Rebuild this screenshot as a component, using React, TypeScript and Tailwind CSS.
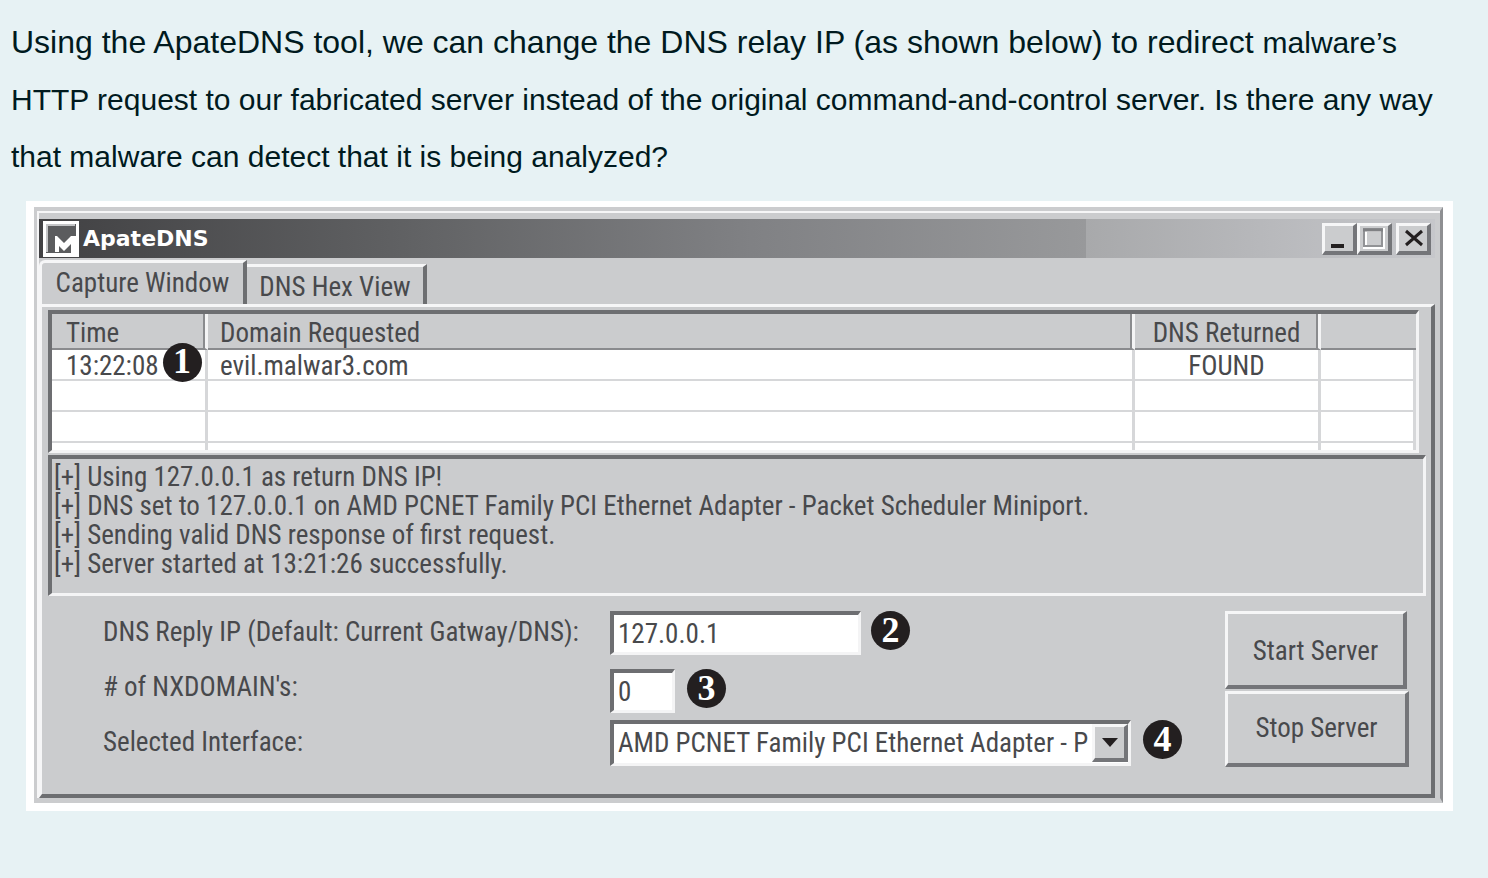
import type { ReactNode } from "react";

const logLines = [
  "[+] Using 127.0.0.1 as return DNS IP!",
  "[+] DNS set to 127.0.0.1 on AMD PCNET Family PCI Ethernet Adapter - Packet Scheduler Miniport.",
  "[+] Sending valid DNS response of first request.",
  "[+] Server started at 13:21:26 successfully.",
];

const raised =
  "border-t-3 border-l-3 border-r-4 border-b-4 border-t-[#f6f6f7] border-l-[#f6f6f7] border-r-[#747579] border-b-[#747579] bg-[#cbccce]";
const sunken =
  "border-t-4 border-l-4 border-r-3 border-b-3 border-t-[#6d6e71] border-l-[#6d6e71] border-r-[#f4f4f5] border-b-[#f4f4f5]";

function Badge({ children }: { children: ReactNode }) {
  return (
    <span className="flex size-[39px] shrink-0 items-center justify-center rounded-full bg-[#231f20] pb-[2px] font-['Liberation_Serif',serif] text-[36px] leading-none font-bold text-white">
      {children}
    </span>
  );
}

function CaptionButton({ label, children }: { label: string; children: ReactNode }) {
  return (
    <button type="button" aria-label={label} className={`h-8 w-[35px] ${raised}`}>
      <svg viewBox="0 0 28 25" className="h-[25px] w-[28px]" fill="none">
        {children}
      </svg>
    </button>
  );
}

function TitleBar() {
  return (
    <div className="flex h-[39px] items-center bg-[linear-gradient(to_right,#414143,#606163_26%,#808184_51%,#98999b_75%,#a8a9ab_75%,#c6c7cb)] pr-1 pl-1">
      <svg viewBox="0 0 36 36" className="size-9 shrink-0">
        <rect width="36" height="36" fill="#fff" />
        <rect x="3" y="3" width="30" height="29" fill="#5b5c5e" />
        <path d="M3 3H32V5H5V31H3Z" fill="#c4c5c7" />
        <path d="M12 31V15H14L21 22L28 15H33V33H28V23L21 30L16 25V31Z" fill="#fff" />
      </svg>
      <h1 className="pl-1 font-['DejaVu_Sans',sans-serif] text-[22px] leading-none font-bold text-white">
        ApateDNS
      </h1>
      <div className="ml-auto flex">
        <CaptionButton label="Minimize">
          <path d="M6 20H19" stroke="#231f20" strokeWidth="4" />
        </CaptionButton>
        <CaptionButton label="Maximize">
          <rect x="5" y="4" width="18" height="17" stroke="#fff" strokeWidth="4" />
          <rect x="4" y="3" width="18" height="17" stroke="#929396" strokeWidth="2" />
          <path d="M3 4H23" stroke="#808184" strokeWidth="3" />
        </CaptionButton>
        <span className="w-1" />
        <CaptionButton label="Close">
          <path d="M7 5L23 19M23 5L7 19" stroke="#231f20" strokeWidth="3" />
        </CaptionButton>
      </div>
    </div>
  );
}

function Tabs() {
  return (
    <div role="tablist" className="flex items-end pt-[2px]">
      <button
        type="button"
        role="tab"
        aria-selected="true"
        className="h-11 w-[208px] rounded-tl-md border-t-3 border-r-4 border-l-3 border-t-[#f6f6f7] border-r-[#6d6e71] border-l-[#f6f6f7] text-center"
      >
        Capture Window
      </button>
      <button
        type="button"
        role="tab"
        aria-selected="false"
        className="h-10 w-[180px] border-t-3 border-r-4 border-t-[#f6f6f7] border-r-[#6d6e71] pt-1 text-center"
      >
        DNS Hex View
      </button>
    </div>
  );
}

function CaptureTable() {
  const head =
    "h-9 border-r-3 border-b-2 border-r-[#f4f4f5] border-b-[#8a8b8e] px-0 pt-1 pb-0 font-normal shadow-[inset_-2px_0_0_#8a8b8e]";
  const cell = "h-[31px] border-r-3 border-b-2 border-[#d6d7d9] px-0 pt-1 pb-0 leading-[25px]";
  return (
    <div className={`mr-3 h-[143px] overflow-hidden bg-white ${sunken}`}>
      <table className="w-full table-fixed border-separate border-spacing-0">
        <thead className="bg-[#cbccce]">
          <tr>
            <th className={`w-[156px] pl-[14px]! text-left ${head}`}>Time</th>
            <th className={`pl-3! text-left ${head}`}>Domain Requested</th>
            <th className={`w-[186px] text-center ${head}`}>DNS Returned</th>
            <th className="w-[95px] border-b-2 border-[#8a8b8e] p-0" />
          </tr>
        </thead>
        <tbody>
          <tr>
            <td className={`pl-[14px]! ${cell}`}>
              <div className="flex items-center gap-1">
                13:22:08
                <span className="relative h-0 w-10">
                  <span className="absolute -top-6 left-0">
                    <Badge>1</Badge>
                  </span>
                </span>
              </div>
            </td>
            <td className={`pl-3! ${cell}`}>evil.malwar3.com</td>
            <td className={`text-center ${cell}`}>FOUND</td>
            <td className={cell} />
          </tr>
          {[0, 1, 2].map((row) => (
            <tr key={row}>
              <td className={cell} />
              <td className={cell} />
              <td className={cell} />
              <td className={cell} />
            </tr>
          ))}
        </tbody>
      </table>
    </div>
  );
}

function ServerForm() {
  return (
    <form className="flex items-start pt-[15px] pr-[22px] pl-[55px]" onSubmit={(e) => e.preventDefault()}>
      <div className="flex w-[507px] shrink-0 flex-col">
        <label htmlFor="reply-ip" className="flex h-[42px] items-center">
          DNS Reply IP (Default: Current Gatway/DNS):
        </label>
        <label htmlFor="nxdomains" className="flex h-[68px] items-center">
          # of NXDOMAIN's:
        </label>
        <label htmlFor="interface" className="flex h-[42px] items-center">
          Selected Interface:
        </label>
      </div>
      <div className="flex flex-col">
        <div className="flex items-start gap-[10px] pb-[14px]">
          <input id="reply-ip" defaultValue="127.0.0.1" className={`h-[44px] w-[251px] bg-white pl-1 ${sunken}`} />
          <Badge>2</Badge>
        </div>
        <div className="flex items-start gap-3 pb-[7px]">
          <input id="nxdomains" defaultValue="0" className={`h-[44px] w-[65px] bg-white pl-1 ${sunken}`} />
          <Badge>3</Badge>
        </div>
        <div className="flex items-start gap-3">
          <div className={`relative h-[46px] w-[521px] bg-white ${sunken}`}>
            <select id="interface" className="h-full w-full appearance-none pr-10 pl-1">
              <option>AMD PCNET Family PCI Ethernet Adapter - Packet Scheduler Miniport</option>
            </select>
            <span
              className={`pointer-events-none absolute top-0 right-0 flex h-[38px] w-9 items-center justify-center ${raised}`}
            >
              <svg viewBox="0 0 16 9" className="h-[9px] w-4">
                <path d="M0 0H16L8 9Z" fill="#231f20" />
              </svg>
            </span>
          </div>
          <Badge>4</Badge>
        </div>
      </div>
      <div className="ml-auto flex flex-col items-start gap-[2px]">
        <button type="button" className={`h-[78px] w-[182px] pt-1 ${raised}`}>
          Start Server
        </button>
        <button type="button" className={`h-[76px] w-[184px] ${raised}`}>
          Stop Server
        </button>
      </div>
    </form>
  );
}

export default function App() {
  return (
    <main className="min-h-screen bg-[#e7f2f4] pt-[14px] pr-[35px] pl-[11px] font-['Liberation_Sans',Arial,sans-serif]">
      <p className="-mr-6 text-[30px] leading-[57px] text-[#001a1e]">
        <span className="text-[32px]">
          Using the ApateDNS tool, we can change the DNS relay IP (as shown below) to redirect{" "}
        </span>
        malware’s
        <br />
        HTTP request to our fabricated server instead of the original command-and-control server. Is there any way
        <br />
        that malware can detect that it is being analyzed?
      </p>

      <figure className="mt-4 ml-[15px] bg-white pt-[6px] pr-[10px] pb-2 pl-2">
        <div className="border-t-4 border-r-3 border-b-5 border-l-3 border-t-[#cbccce] border-r-[#8e8f92] border-b-[#cbccce] border-l-[#cbccce] bg-[#cbccce] text-[27px] leading-[29px] text-[#48494c] font-['Roboto_Condensed','Liberation_Sans',sans-serif]">
          <div className="border-t-2 border-l-2 border-[#f6f6f7] pt-[6px] pr-[5px]">
            <TitleBar />
            <Tabs />
            <div className="border-t-3 border-r-4 border-b-4 border-l-3 border-t-[#f6f6f7] border-r-[#6d6e71] border-b-[#6d6e71] border-l-[#f6f6f7] pt-[3px] pb-[27px] pl-[6px]">
              <CaptureTable />
              <div role="log" className={`mt-[2px] mr-[5px] h-[141px] pt-1 pl-[2px] whitespace-nowrap ${sunken}`}>
                {logLines.map((line) => (
                  <div key={line}>{line}</div>
                ))}
              </div>
              <ServerForm />
            </div>
          </div>
        </div>
      </figure>
    </main>
  );
}
